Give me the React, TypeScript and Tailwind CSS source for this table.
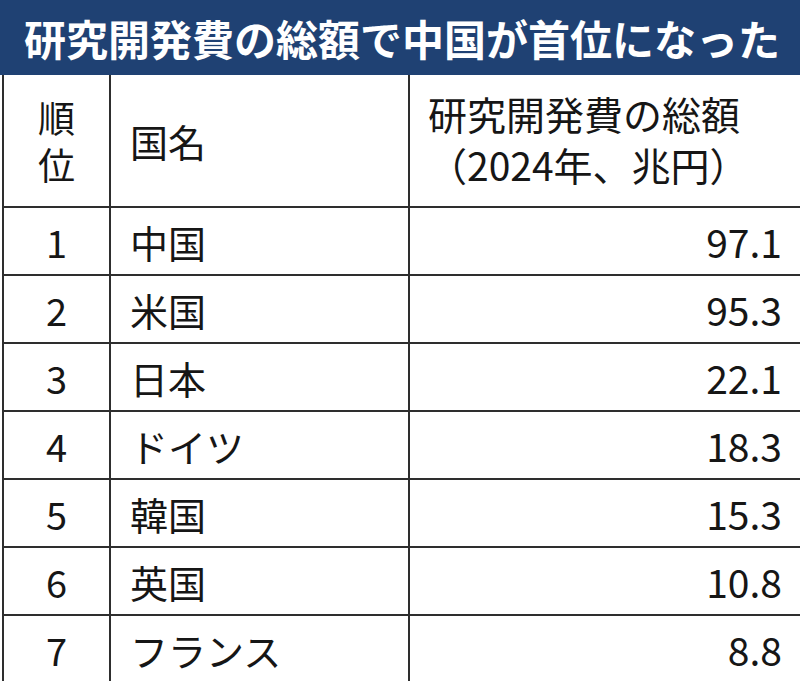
const rows = [
  { rank: 1, name: "中国", value: "97.1" },
  { rank: 2, name: "米国", value: "95.3" },
  { rank: 3, name: "日本", value: "22.1" },
  { rank: 4, name: "ドイツ", value: "18.3" },
  { rank: 5, name: "韓国", value: "15.3" },
  { rank: 6, name: "英国", value: "10.8" },
  { rank: 7, name: "フランス", value: "8.8" },
];

const font = { fontFamily: '"Noto Sans CJK JP", "Noto Sans", sans-serif' };

export default function App() {
  return (
    <div className="w-[800px] h-[681px] overflow-hidden bg-white text-[#161616]" style={font}>
      {/* Title bar */}
      <div className="h-[75px] bg-[#1f4173] flex items-center pl-[24px]">
        <h1 className="text-[42px] leading-none font-bold text-white whitespace-nowrap">
          研究開発費の総額で中国が首位になった
        </h1>
      </div>

      <div className="ml-[2px] border-l-2 border-[#2e2e2e]">
        {/* Header row */}
        <div className="grid grid-cols-[107px_299px_1fr] h-[133px]">
          <div className="border-r-2 border-b-2 border-[#2e2e2e] flex items-center justify-center">
            <p className="w-[1em] text-[37px] leading-[47px] break-all text-center">順位</p>
          </div>
          <div className="border-r-2 border-b-2 border-[#2e2e2e] flex items-center pl-[19px] text-[38px]">
            国名
          </div>
          <div className="border-b-2 border-[#2e2e2e] flex items-center pl-[18px] pb-[4px]">
            <p className="w-[8em] text-[39px] leading-[51px]">研究開発費の総額（2024年、兆円）</p>
          </div>
        </div>

        {rows.map((r) => (
          <div key={r.rank} className="grid grid-cols-[107px_299px_1fr] h-[68px]">
            <div className="border-r-2 border-b-2 border-[#2e2e2e] flex items-center justify-center text-[38px]">
              {r.rank}
            </div>
            <div className="border-r-2 border-b-2 border-[#2e2e2e] flex items-center pl-[19px] text-[38px]">
              {r.name}
            </div>
            <div className="border-b-2 border-[#2e2e2e] flex items-center justify-end pr-[18px] text-[39px]">
              {r.value}
            </div>
          </div>
        ))}
      </div>
    </div>
  );
}
